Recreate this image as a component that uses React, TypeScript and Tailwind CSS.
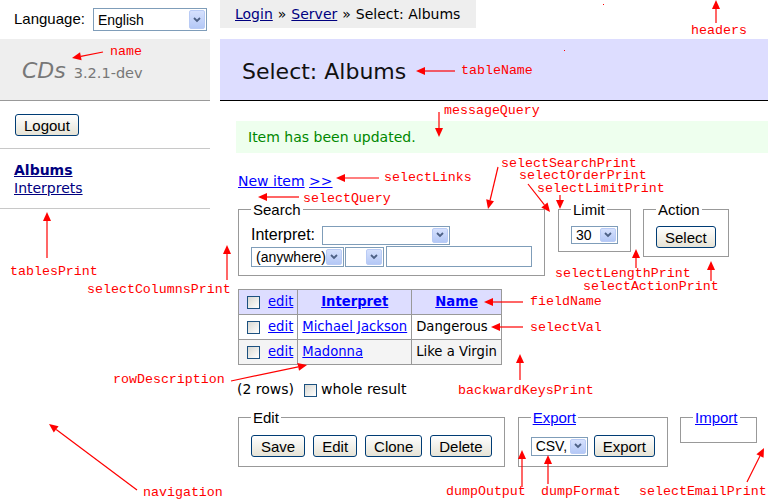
import React from 'react';

const sans = "font-['Liberation_Sans',Arial,sans-serif]";

const Chevron = () => (
  <svg width="8" height="6" viewBox="0 0 8 6">
    <path d="M1 1 L4 4 L7 1" stroke="#4d6185" strokeWidth="1.8" fill="none" />
  </svg>
);

const Select = ({ text, className }: { text?: string; className: string }) => (
  <div className={`flex items-stretch border border-[#7f9db9] bg-white p-px ${sans} text-[14px] ${className}`}>
    <span className="flex-1 flex items-center pl-[3px] leading-none overflow-hidden whitespace-nowrap">{text}</span>
    <span className="w-[16px] rounded-[2px] border border-[#b9cbf5] bg-linear-to-b from-[#d6e1fd] to-[#b4c8f6] flex items-center justify-center">
      <Chevron />
    </span>
  </div>
);

const Button = ({ children, className = '' }: { children: React.ReactNode; className?: string }) => (
  <button
    className={`h-[22px] px-[8px] border border-[#003c74] rounded-[3px] bg-linear-to-b from-white to-[#e6e3d6] ${sans} text-[15px] leading-none text-black ${className}`}
  >
    {children}
  </button>
);

const Checkbox = () => (
  <span className="inline-block w-[13px] h-[13px] border border-[#1c5180] bg-linear-to-br from-[#d8d8d2] to-white align-middle" />
);

const Fieldset = ({
  legend,
  className = '',
  children,
}: {
  legend: React.ReactNode;
  className?: string;
  children?: React.ReactNode;
}) => (
  <fieldset className={`border border-[#999] px-[12px] pt-[8px] ${className}`}>
    <legend className={`px-[2px] ${sans} text-[15px] leading-[17px]`}>{legend}</legend>
    {children}
  </fieldset>
);

const notes: [string, number, number][] = [
  ['name', 110, 52],
  ['headers', 691, 31],
  ['tableName', 461, 71],
  ['messageQuery', 444, 111],
  ['selectSearchPrint', 501, 164],
  ['selectOrderPrint', 519, 176],
  ['selectLimitPrint', 537, 189],
  ['selectLinks', 384, 178],
  ['selectQuery', 303, 199],
  ['tablesPrint', 10, 272],
  ['selectColumnsPrint', 87, 290],
  ['selectLengthPrint', 555, 274],
  ['selectActionPrint', 583, 287],
  ['fieldName', 530, 302],
  ['selectVal', 530, 328],
  ['rowDescription', 113, 380],
  ['backwardKeysPrint', 458, 391],
  ['navigation', 143, 493],
  ['dumpOutput', 446, 492],
  ['dumpFormat', 541, 492],
  ['selectEmailPrint', 639, 492],
];

const arrows = [
  [103, 52, 72, 58],
  [716, 23, 716, 0],
  [455, 71, 416, 71],
  [439, 112, 439, 137],
  [498, 167, 488, 209],
  [528, 184, 550, 212],
  [560, 195, 560, 209],
  [379, 178, 336, 178],
  [299, 197, 258, 197],
  [47, 258, 47, 212],
  [227, 280, 227, 245],
  [636, 268, 636, 249],
  [711, 281, 711, 261],
  [523, 302, 484, 302],
  [523, 327, 491, 327],
  [231, 381, 307, 365],
  [520, 380, 520, 354],
  [137, 490, 49, 424],
  [522, 487, 522, 450],
  [548, 484, 548, 455],
  [747, 482, 764, 448],
];

const Arrow = ({ a }: { a: number[] }) => {
  const [x1, y1, x2, y2] = a;
  const ang = Math.atan2(y2 - y1, x2 - x1);
  const c = Math.cos(ang);
  const s = Math.sin(ang);
  const bx = x2 - 9 * c;
  const by = y2 - 9 * s;
  const pts = `${x2},${y2} ${bx - 4 * s},${by + 4 * c} ${bx + 4 * s},${by - 4 * c}`;
  return (
    <g>
      <line x1={x1} y1={y1} x2={bx} y2={by} stroke="#f00" strokeWidth="1.2" />
      <polygon points={pts} fill="#f00" />
    </g>
  );
};

const Sidebar = () => (
  <aside className="w-[210px] shrink-0">
    <div className="h-[39px] flex items-center pl-[14px] gap-[8px]">
      <span className={`${sans} text-[15px]`}>Language:</span>
      <Select text="English" className="w-[114px] h-[23px]" />
    </div>
    <div className="h-[62px] bg-[#eee] border-b border-[#999] pl-[22px] pt-[21px] flex items-baseline gap-[8px] text-[#777] leading-none">
      <span className="italic text-[22px]">CDs</span>
      <span className="text-[14.5px]">3.2.1-dev</span>
    </div>
    <div className="h-[48px] pt-[13px] pl-[15px] border-b border-[#c8c8c8]">
      <Button>Logout</Button>
    </div>
    <div className="h-[60px] pt-[12px] pl-[14px] border-b border-[#c8c8c8] leading-[18px] text-[14px]">
      <a className="block font-bold text-[#000080] underline">Albums</a>
      <a className="block text-[#000080] underline">Interprets</a>
    </div>
  </aside>
);

const Main = () => (
  <main className="ml-[10px] flex-1">
    <div className="inline-flex h-[28px] items-center bg-[#eee] pl-[15px] pr-[16px]">
      <a className="text-[#000080] underline">Login</a>
      <span className="mx-[5px]">»</span>
      <a className="text-[#000080] underline">Server</a>
      <span className="mx-[5px]">»</span>
      <span>Select: Albums</span>
    </div>
    <h2 className="mt-[11px] h-[62px] bg-[#ddf] border-b border-black pl-[22px] pt-[3px] flex items-center text-[22px] text-[#111]">
      Select: Albums
    </h2>
    <div className="mt-[20px] ml-[16px] h-[32px] bg-[#efe] text-[#080] pl-[12px] flex items-center">
      Item has been updated.
    </div>
    <p className="mt-[20px] ml-[18px] leading-[16px] text-[#00f]">
      <a className="underline">New item</a> <a className="underline">&gt;&gt;</a>
    </p>

    <div className="ml-[18px] mt-[12px] flex items-start">
      <Fieldset legend="Search" className="w-[304px] pb-[8px]">
        <div className="flex items-center gap-[7px] h-[18px]">
          <span className={`${sans} text-[16px] leading-none`}>Interpret:</span>
          <Select className="w-[128px] h-[19px]" />
        </div>
        <div className="mt-[2px] flex items-center">
          <Select text="(anywhere)" className="w-[93px] h-[20px]" />
          <Select className="w-[39px] h-[20px] ml-px" />
          <div className="w-[146px] h-[21px] ml-[2px] border border-[#7f9db9] bg-white" />
        </div>
      </Fieldset>
      <Fieldset legend="Limit" className="w-[73px] ml-[13px] pb-[7px]">
        <Select text="30" className="w-[47px] h-[18px]" />
      </Fieldset>
      <Fieldset legend="Action" className="w-[86px] ml-[12px] pb-[7px]">
        <Button>Select</Button>
      </Fieldset>
    </div>

    <table className="ml-[18px] mt-[13px] border-collapse border border-[#999] leading-[16px] text-[13.2px]">
      <thead>
        <tr className="bg-[#ddf]">
          <td className="border border-[#999] px-[4px] py-[4px]">
            <span className="ml-[4px] mr-[8px]"><Checkbox /></span>
            <a className="text-[#00f] underline">edit</a>
          </td>
          <th className="border border-[#999] px-[4px] py-[4px] text-center">
            <a className="text-[#00f] underline">Interpret</a>
          </th>
          <th className="border border-[#999] px-[4px] py-[4px] text-center">
            <a className="text-[#00f] underline">Name</a>
          </th>
        </tr>
      </thead>
      <tbody>
        <tr>
          <td className="border border-[#999] px-[4px] py-[4px]">
            <span className="ml-[4px] mr-[8px]"><Checkbox /></span>
            <a className="text-[#00f] underline">edit</a>
          </td>
          <td className="border border-[#999] px-[4px] py-[4px]">
            <a className="text-[#00f] underline">Michael Jackson</a>
          </td>
          <td className="border border-[#999] px-[4px] py-[4px]">Dangerous</td>
        </tr>
        <tr className="bg-[#f4f4f4]">
          <td className="border border-[#999] px-[4px] py-[4px]">
            <span className="ml-[4px] mr-[8px]"><Checkbox /></span>
            <a className="text-[#00f] underline">edit</a>
          </td>
          <td className="border border-[#999] px-[4px] py-[4px]">
            <a className="text-[#00f] underline">Madonna</a>
          </td>
          <td className="border border-[#999] px-[4px] py-[4px]">Like a Virgin</td>
        </tr>
      </tbody>
    </table>

    <p className="ml-[17px] mt-[16px] leading-[16px] flex items-center">
      <span>(2 rows)</span>
      <span className="ml-[10px]"><Checkbox /></span>
      <span className="ml-[4px]">whole result</span>
    </p>

    <div className="ml-[18px] mt-[12px] flex items-start">
      <Fieldset legend="Edit" className="w-[266px] pt-[9px] pb-[9px]">
        <div className="flex gap-[8px]">
          <Button className="px-[9px]">Save</Button>
          <Button>Edit</Button>
          <Button>Clone</Button>
          <Button>Delete</Button>
        </div>
      </Fieldset>
      <Fieldset legend={<a className="text-[#00f] underline">Export</a>} className="w-[149px] ml-[13px] pt-[9px] pb-[9px]">
        <div className="flex items-center gap-[6px]">
          <Select text="CSV," className="w-[57px] h-[19px]" />
          <Button>Export</Button>
        </div>
      </Fieldset>
      <Fieldset legend={<a className="text-[#00f] underline">Import</a>} className="w-[77px] ml-[12px] pb-[8px]">
        <div className="h-0" />
      </Fieldset>
    </div>
  </main>
);

export default function App() {
  return (
    <div className="relative w-[768px] h-[499px] overflow-hidden bg-white text-black text-[14px] font-['DejaVu_Sans',Verdana,sans-serif]">
      <div className="flex">
        <Sidebar />
        <Main />
      </div>

      <svg className="absolute inset-0 pointer-events-none" width="768" height="499">
        {arrows.map((a, i) => (
          <Arrow key={i} a={a} />
        ))}
        <rect x="603" y="4" width="1" height="1" fill="#f00" />
        <rect x="564" y="50" width="1" height="1" fill="#f00" />
      </svg>
      {notes.map(([t, x, y]) => (
        <span
          key={t}
          className="absolute text-[#f00] text-[13.3px] leading-[10px] font-['Liberation_Mono','Courier_New',monospace] whitespace-nowrap"
          style={{ left: x, top: y - 5 }}
        >
          {t}
        </span>
      ))}
    </div>
  );
}
